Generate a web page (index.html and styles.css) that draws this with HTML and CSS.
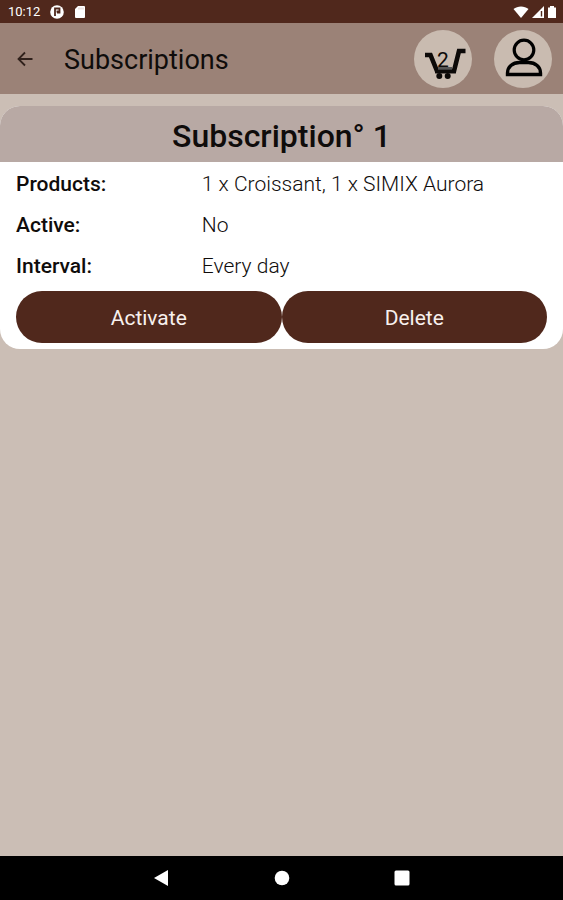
FILE: index.html
```html
<!DOCTYPE html>
<html lang="en">
<head>
    <meta charset="UTF-8">
    <meta name="viewport" content="width=device-width, initial-scale=1.0">
    <title>Subscriptions</title>
    <link rel="stylesheet" href="styles.css">
</head>
<body>
    <div class="status-bar">
        <span class="clock">10:12</span>
        <svg class="status-icon" width="14" height="14" viewBox="0 0 14 14">
            <circle cx="7" cy="7" r="6.8" fill="#fff"/>
            <path d="M5 11V3.5h4.5v4H7" fill="none" stroke="#50281c" stroke-width="1.8"/>
            <path d="M6.5 5.5h3v2h-3z" fill="#50281c"/>
        </svg>
        <svg class="status-icon" width="12" height="14" viewBox="0 0 12 14">
            <path d="M4 1h6a1 1 0 0 1 1 1v10a1 1 0 0 1-1 1H2a1 1 0 0 1-1-1V4z" fill="#fff"/>
            <path d="M5 2.5v2M7 2.5v2M9 2.5v2" stroke="#cbb" stroke-width="0.8"/>
        </svg>
        <div class="status-right">
            <svg width="16" height="14" viewBox="0 0 16 14">
                <path d="M0.5 4C4.5 0.5 11.5 0.5 15.5 4L8 13z" fill="#fff"/>
            </svg>
            <svg width="14" height="14" viewBox="0 0 14 14">
                <path d="M1 13L13 1v12z" fill="#fff"/>
                <path d="M10.5 6v5.5" stroke="#50281c" stroke-width="1.4"/>
            </svg>
            <svg width="10" height="14" viewBox="0 0 10 14">
                <path d="M3 1h4v1.5h2V13H1V2.5h2z" fill="#fff"/>
            </svg>
        </div>
    </div>

    <header class="header">
        <button class="back-button" type="button" aria-label="Back">
            <svg width="18" height="18" viewBox="0 0 18 18">
                <path d="M16.5 9H3M9 2.5L2.5 9L9 15.5" fill="none" stroke="#30211c" stroke-width="1.8"/>
            </svg>
        </button>
        <h1>Subscriptions</h1>
        <button class="round-button" type="button" aria-label="Cart, 2 items">
            <svg width="58" height="58" viewBox="0 0 58 58">
                <path d="M11 25h5.5l6.5 16h17l5-20h6.5" fill="none" stroke="#0c0908" stroke-width="4.6"/>
                <path d="M24 37h14v3H24z" fill="#555"/>
                <path d="M21 41.5h21" stroke="#0c0908" stroke-width="3.6"/>
                <circle cx="25.3" cy="46" r="3" fill="#0c0908"/>
                <circle cx="33.7" cy="46" r="3" fill="#0c0908"/>
            </svg>
            <span class="cart-count">2</span>
        </button>
        <button class="round-button" type="button" aria-label="Account">
            <svg width="58" height="58" viewBox="0 0 58 58">
                <circle cx="30" cy="20" r="9.8" fill="none" stroke="#000" stroke-width="3.2"/>
                <path d="M13.5 44.5v-1.5c0-6 5-10.5 12-10.5h9c7 0 12 4.5 12 10.5v1.5z" fill="none" stroke="#000" stroke-width="3.4"/>
            </svg>
        </button>
    </header>

    <main class="content">
        <section class="card">
            <h2>Subscription° 1</h2>
            <div class="card-body">
                <dl>
                    <dt>Products:</dt>
                    <dd>1 x Croissant, 1 x SIMIX Aurora</dd>
                    <dt>Active:</dt>
                    <dd>No</dd>
                    <dt>Interval:</dt>
                    <dd>Every day</dd>
                </dl>
                <div class="actions">
                    <button type="button">Activate</button>
                    <button type="button">Delete</button>
                </div>
            </div>
        </section>
    </main>

    <nav class="nav-bar">
        <button type="button" aria-label="Back">
            <svg width="16" height="18" viewBox="0 0 16 18">
                <path d="M14 1v16L0 9z" fill="#fff"/>
            </svg>
        </button>
        <button type="button" aria-label="Home">
            <svg width="16" height="16" viewBox="0 0 16 16">
                <circle cx="8" cy="8" r="7.3" fill="#fff"/>
            </svg>
        </button>
        <button type="button" aria-label="Recent apps">
            <svg width="16" height="16" viewBox="0 0 16 16">
                <rect x="0.5" y="0.5" width="15" height="15" rx="1.5" fill="#fff"/>
            </svg>
        </button>
    </nav>
</body>
</html>
```
FILE: styles.css
```css
* {
    box-sizing: border-box;
}

body {
    display: flex;
    flex-direction: column;
    min-height: 100vh;
    margin: 0;
    font-family: Roboto, sans-serif;
    color: #0f0c0b;
    background-color: #cbbeb5;
}

button {
    padding: 0;
    border: none;
    background: none;
    font-family: inherit;
    color: inherit;
    cursor: pointer;
}

svg {
    display: block;
}

.status-bar {
    display: flex;
    align-items: center;
    height: 23px;
    padding: 0 6px 0 8px;
    background-color: #50281c;
    color: #ffffff;
}

.clock {
    font-size: 13px;
}

.status-icon {
    margin-left: 10px;
}

.status-right {
    display: flex;
    gap: 2px;
    margin-left: auto;
}

.header {
    display: flex;
    align-items: center;
    height: 71px;
    padding: 0 11px 0 16px;
    background-color: #9b8277;
}

.header h1 {
    flex: 1;
    margin: 0 0 0 30px;
    padding-top: 2px;
    font-size: 27px;
    font-weight: 400;
}

.round-button {
    position: relative;
    width: 58px;
    height: 58px;
    margin-left: 22px;
    border-radius: 50%;
    background-color: #c9bbb0;
}

.cart-count {
    position: absolute;
    top: 18px;
    left: 0;
    width: 100%;
    font-size: 21px;
    line-height: 24px;
    text-align: center;
}

.content {
    flex: 1;
    padding-top: 12px;
}

.card {
    overflow: hidden;
    border-radius: 20px;
    background-color: #ffffff;
}

.card h2 {
    margin: 0;
    padding: 12px 0 8px;
    font-size: 32px;
    font-weight: 500;
    line-height: 36px;
    text-align: center;
    background-color: #b8a9a4;
}

.card-body {
    padding: 2px 16px 6px;
}

dl {
    display: grid;
    grid-template-columns: 35% 1fr;
    margin: 0;
    font-size: 21px;
    line-height: 41px;
}

dt {
    font-weight: 500;
}

dd {
    margin: 0;
    font-weight: 300;
}

.actions {
    display: flex;
    padding-top: 4px;
}

.actions button {
    flex: 1;
    height: 52px;
    padding-top: 2px;
    border-radius: 26px;
    font-size: 21px;
    color: #f8f1ee;
    background-color: #50281c;
}

.nav-bar {
    display: flex;
    justify-content: center;
    align-items: center;
    gap: 104px;
    height: 44px;
    background-color: #000000;
}
```
